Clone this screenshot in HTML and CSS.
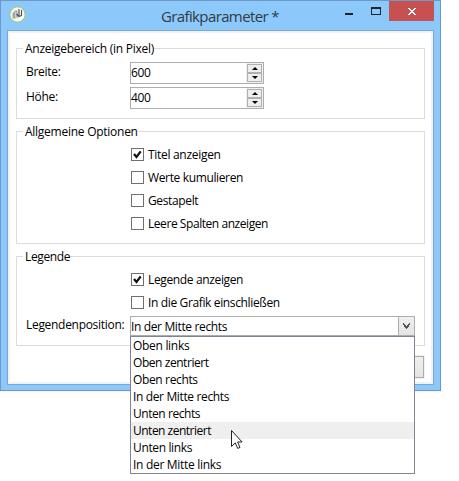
FILE: index.html
```html
<!DOCTYPE html>
<html lang="de">
<head>
<meta charset="utf-8">
<title>Grafikparameter</title>
<link rel="stylesheet" href="styles.css">
</head>
<body>
<div class="window">
  <header class="titlebar">
    <svg class="app-icon" width="17" height="17" viewBox="0 0 17 17">
      <circle cx="8.500" cy="8.500" r="7.700" fill="#f6f6f2" stroke="#9bc46b"/>
      <path d="M3.500 7l3-2v8l-3-1z" fill="#a5a8a4"/>
      <path d="M5.500 5.500q2.500-1.500 2.500 1.500v5" fill="none" stroke="#999" stroke-width="1.200"/>
      <path d="M10 3v7M7.500 8l2.500 2.500 2.500-1V4" fill="none" stroke="#4c5153" stroke-width="1.100"/>
    </svg>
    <h1 class="title">Grafikparameter *</h1>
    <div class="controls">
      <svg class="control" width="27" height="20" viewBox="0 0 27 20" shape-rendering="crispEdges"><path d="M10 12h8v2h-8z" fill="#222"/></svg>
      <svg class="control" width="27" height="20" viewBox="0 0 27 20" shape-rendering="crispEdges"><path d="M9 6h10v8H9zM10 8v5h8V8z" fill="#222" fill-rule="evenodd"/></svg>
      <svg class="close" width="45" height="20" viewBox="0 0 45 20" shape-rendering="crispEdges"><path d="M19 7h2v1h1v1h2v-1h1v-1h2v1h-1v1h-1v1h-1v1h1v1h1v1h1v1h-2v-1h-1v-1h-2v1h-1v1h-2v-1h1v-1h1v-1h1v-1h-1v-1h-1v-1h-1z" fill="#fff"/></svg>
    </div>
  </header>
  <main class="client">
    <section class="group size">
      <h2 class="legend"><span class="wide">Anzeigebereich (in Pixel)</span></h2>
      <div class="row"><label>Breite:</label>
        <div class="spinner"><span>600</span><div class="arrows"><i class="up"></i><i class="down"></i></div></div></div>
      <div class="row"><label>Höhe:</label>
        <div class="spinner"><span>400</span><div class="arrows"><i class="up"></i><i class="down"></i></div></div></div>
    </section>
    <section class="group options">
      <h2 class="legend"><span class="wide">Allgemeine Optionen</span></h2>
      <div class="check"><span class="box"><svg width="11" height="11" viewBox="0 0 11 11"><path d="M2 5l2.500 3L8.700 2.300" fill="none" stroke="#111" stroke-width="2.200"/></svg></span><span>Titel anzeigen</span></div>
      <div class="check"><span class="box"></span><span class="tight">Werte kumulieren</span></div>
      <div class="check"><span class="box"></span><span class="tight">Gestapelt</span></div>
      <div class="check"><span class="box"></span><span class="tighter">Leere Spalten anzeigen</span></div>
    </section>
    <section class="group key">
      <h2 class="legend"><span class="tight">Legende</span></h2>
      <div class="check"><span class="box"><svg width="11" height="11" viewBox="0 0 11 11"><path d="M2 5l2.500 3L8.700 2.300" fill="none" stroke="#111" stroke-width="2.200"/></svg></span><span class="tight">Legende anzeigen</span></div>
      <div class="check"><span class="box"></span><span class="tight">In die Grafik einschließen</span></div>
      <div class="row position"><label>Legendenposition:</label>
        <div class="combo"><span class="tight">In der Mitte rechts</span><div class="drop"><svg width="7" height="6" viewBox="0 0 7 6" shape-rendering="crispEdges"><path d="M0 0h1v1h1v1h1v1h1v-1h1v-1h1v-1h1v2h-1v2h-1v1h-1v1h-1v-1h-1v-1h-1v-2h-1z" fill="#555"/></svg></div>
          <ul class="menu">
            <li>Oben links</li>
            <li class="tighter">Oben zentriert</li>
            <li class="tight">Oben rechts</li>
            <li class="tight">In der Mitte rechts</li>
            <li class="tighter">Unten rechts</li>
            <li class="tightest active">Unten zentriert</li>
            <li class="tight">Unten links</li>
            <li>In der Mitte links</li>
          </ul>
        </div></div>
    </section>
    <footer class="actions"><button class="button" aria-label="OK"></button></footer>
  </main>
</div>
<svg class="cursor" width="12" height="19" viewBox="0 0 12 19"><path d="M.500.500v16l3.700-3.600 2.500 5.500 2.300-1-2.400-5.400h4.500z" fill="#fff" stroke="#222" stroke-width="1"/></svg>
</body>
</html>
```
FILE: styles.css
```css
* { box-sizing: border-box; }
body {
  margin: 0;
  width: 459px;
  height: 481px;
  overflow: hidden;
  background: #fff;
  color: #000;
  font: 12px/16px "Open Sans", "Noto Sans", sans-serif;
  letter-spacing: -0.3px;
  white-space: nowrap;
}
.wide { letter-spacing: -0.26px; }
.tight { letter-spacing: -0.36px; }
.tighter { letter-spacing: -0.44px; }
.tightest { letter-spacing: -0.5px; }
.window {
  width: 441px;
  height: 391px;
  padding: 0 6px 6px;
  border: 1px solid #6c99c6;
  background: #8cc8fa;
  box-shadow: 0 1px 2px #eee;
}
.titlebar { display: flex; height: 29px; }
.app-icon { margin: 5px 0 0 2px; }
.title {
  flex: 1;
  margin: 5px 0 0 135px;
  font-size: 15px;
  line-height: 20px;
  font-weight: 400;
  letter-spacing: -0.62px;
  color: #303b46;
}
.controls { display: flex; }
.close { background: #c75050; }
.client {
  height: 355px;
  padding: 17px 6px 0;
  border: 1px solid #78a9d7;
  background: #fff;
  box-shadow: inset 0 0 0 2px #f2f2f2;
}
.group { width: 409px; margin-left: 2px; padding: 0 9px; border: 1px solid #dcdcdc; }
.size { height: 71px; }
.options { height: 113px; margin-top: 12px; }
.key { height: 90px; margin-top: 12px; }
.legend {
  width: max-content;
  height: 16px;
  margin: -8px 0 0 -3px;
  padding-left: 2px;
  background: #fff;
  font: inherit;
}
.row { display: flex; height: 25px; }
.row label { width: 104px; padding-top: 2px; }
.size .row:nth-of-type(1) { margin-top: 5px; }
.spinner {
  display: flex;
  justify-content: space-between;
  width: 134px;
  height: 22px;
  border: 1px solid #abadb3;
  line-height: 19px;
}
.arrows { display: flex; flex-direction: column; width: 17px; padding: 1px; background: #f0f0f0; }
.arrows i {
  display: flex;
  justify-content: center;
  align-items: center;
  height: 9px;
  border: 1px solid #b0b0b0;
  background: #eee;
}
.arrows i::before { content: ""; border: 3px solid transparent; }
.arrows .up::before { border-top: 0; border-bottom-color: #000; }
.arrows .down::before { border-bottom: 0; border-top-color: #000; }
.check { display: flex; gap: 4px; height: 23px; margin-left: 105px; line-height: 14px; }
.legend + .check { margin-top: 8px; }
.box { width: 13px; height: 13px; border: 1px solid #707070; line-height: 0; }
.position { margin-top: -3px; }
.position label { padding-top: 1px; }
.combo {
  position: relative;
  display: flex;
  justify-content: space-between;
  width: 285px;
  height: 20px;
  border: 1px solid #abadb3;
  line-height: 19px;
}
.drop {
  display: flex;
  align-items: center;
  justify-content: center;
  width: 16px;
  border-left: 1px solid #abadb3;
  background: linear-gradient(#f0f0f0, #e4e4e4);
}
.menu {
  position: absolute;
  z-index: 1;
  top: 19px;
  left: -1px;
  width: 285px;
  height: 138px;
  margin: 0;
  padding: 0;
  border: 1px solid #7f8490;
  background: #fff;
  list-style: none;
  line-height: 18px;
}
.menu li { height: 17px; padding-left: 2px; }
.menu .active { background: #efefef; }
.actions { display: flex; justify-content: flex-end; padding: 10px 3px 0 0; }
.button {
  width: 75px;
  height: 22px;
  border: 1px solid #acacac;
  background: linear-gradient(#f0f0f0, #e4e4e4);
  box-shadow: 0 0 0 1px #f0f0f0;
}
.cursor { position: absolute; z-index: 2; left: 231px; top: 430px; }
```
